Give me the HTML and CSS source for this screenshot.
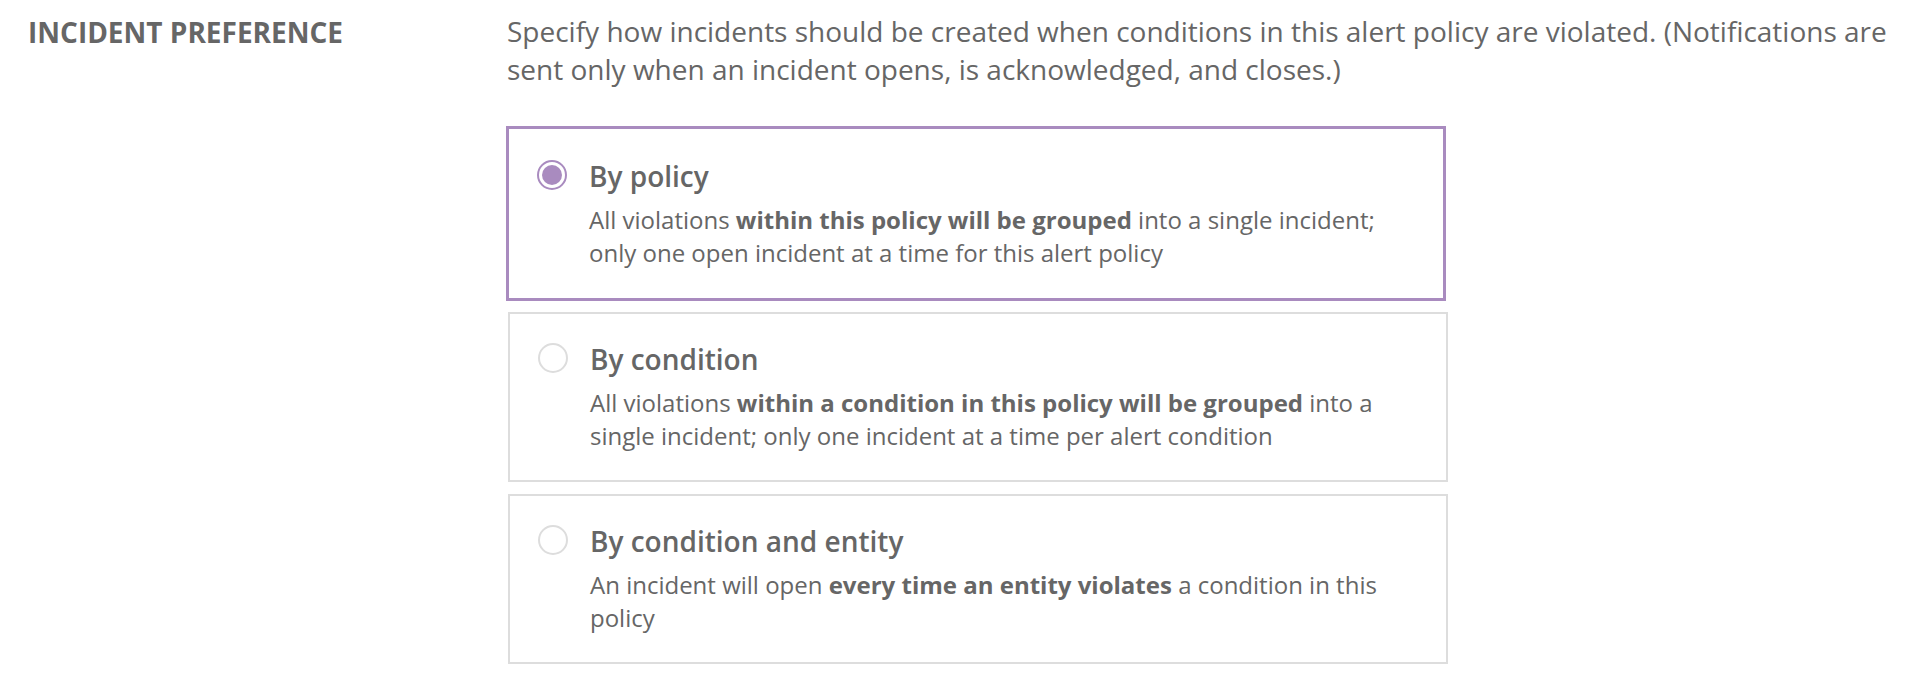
FILE: index.html
```html
<!DOCTYPE html>
<html>
<head>
<meta charset="utf-8">
<link rel="stylesheet" href="styles.css">
</head>
<body>
<div class="section">
  <div class="label">Incident preference</div>
  <div class="content">
    <p class="intro">Specify how incidents should be created when conditions in this alert policy are violated. (Notifications are sent only when an incident opens, is acknowledged, and closes.)</p>
    <div class="options">
      <div class="option selected">
        <span class="radio"><span class="dot"></span></span>
        <div class="text">
          <div class="title">By policy</div>
          <div class="desc">All violations <b>within this policy will be grouped</b> into a single incident; only one open incident at a time for this alert policy</div>
        </div>
      </div>
      <div class="option">
        <span class="radio"></span>
        <div class="text">
          <div class="title">By condition</div>
          <div class="desc">All violations <b>within a condition in this policy will be grouped</b> into a single incident; only one incident at a time per alert condition</div>
        </div>
      </div>
      <div class="option">
        <span class="radio"></span>
        <div class="text">
          <div class="title">By condition and entity</div>
          <div class="desc">An incident will open <b>every time an entity violates</b> a condition in this policy</div>
        </div>
      </div>
    </div>
  </div>
</div>
</body>
</html>
```
FILE: styles.css
```css
* { box-sizing: border-box; }
body {
  margin: 0;
  background: #fff;
  font-family: "Open Sans", "Liberation Sans", sans-serif;
  color: #666;
}
.section {
  display: flex;
  padding: 12px 0 0 28px;
}
.label {
  width: 479px;
  flex: none;
  font-size: 28px;
  font-weight: 700;
  text-transform: uppercase;
  line-height: 38px;
  margin-top: 1px;
}
.content {
  flex: 1;
  padding-right: 8px;
}
.intro {
  margin: 0;
  font-size: 28px;
  line-height: 38px;
}
.options {
  margin-top: 38px;
  display: flex;
  flex-direction: column;
  gap: 12px;
}
.option {
  width: 940px;
  margin-left: 1px;
  border: 2px solid #ddd;
  display: flex;
  align-items: flex-start;
  padding: 28px 28px 28px;
}
.option.selected {
  margin-left: -1px;
  margin-bottom: -1px;
  border: 3px solid #a98bbf;
  padding-top: 30px;
  padding-bottom: 29px;
}
.radio {
  flex: none;
  width: 30px;
  height: 30px;
  border: 2px solid #ddd;
  border-radius: 50%;
  display: flex;
  align-items: center;
  justify-content: center;
  margin-top: 1px;
  margin-right: 22px;
}
.selected .radio { border-color: #a98bbf; }
.dot {
  width: 20px;
  height: 20px;
  border-radius: 50%;
  background: #a98bbf;
}
.title {
  font-size: 28px;
  font-weight: 600;
  line-height: 34px;
  margin-bottom: 10px;
}
.desc {
  font-size: 24px;
  line-height: 33px;
}
.desc b { font-weight: 700; }
```
